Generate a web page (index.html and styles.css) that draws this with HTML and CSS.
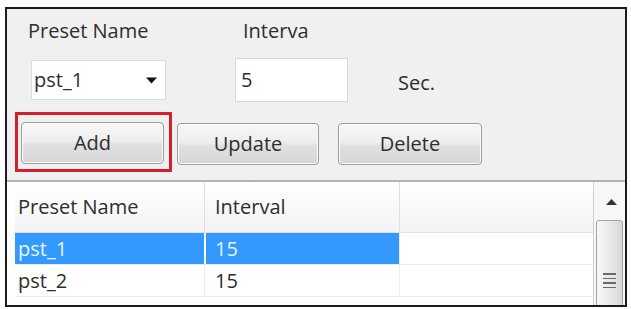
FILE: index.html
```html
<!DOCTYPE html>
<html>
<head>
<meta charset="utf-8">
<link rel="stylesheet" href="styles.css">
</head>
<body>
<div class="frame">
  <div class="form">
    <div class="labels">
      <span class="lbl lbl-name">Preset Name</span>
      <span class="lbl lbl-int">Interva</span>
    </div>
    <div class="fields">
      <div class="combo"><span>pst_1</span><svg class="caret" width="11" height="7" viewBox="0 0 11 7"><path d="M0 0.5h11L5.5 6.5z" fill="#111"/></svg></div>
      <div class="input">5</div>
      <span class="unit">Sec.</span>
    </div>
    <div class="buttons">
      <div class="highlight"><button class="btn btn-add">Add</button></div>
      <button class="btn btn-update">Update</button>
      <button class="btn btn-delete">Delete</button>
    </div>
  </div>
  <div class="table">
    <div class="grid">
      <div class="row head">
        <div class="cell c1">Preset Name</div>
        <div class="cell c2">Interval</div>
        <div class="cell c3"></div>
      </div>
      <div class="row selected">
        <div class="cell c1">pst_1</div>
        <div class="cell c2">15</div>
        <div class="cell c3"></div>
      </div>
      <div class="row">
        <div class="cell c1">pst_2</div>
        <div class="cell c2">15</div>
        <div class="cell c3"></div>
      </div>
    </div>
    <div class="scrollbar">
      <svg class="up" width="11" height="6" viewBox="0 0 11 6"><path d="M0 6L5.5 0 11 6z" fill="#333"/></svg>
      <div class="thumb">
        <span class="grip"></span><span class="grip"></span><span class="grip"></span><span class="grip"></span>
      </div>
    </div>
  </div>
</div>
</body>
</html>
```
FILE: styles.css
```css
* { box-sizing: border-box; }
html, body { margin: 0; padding: 0; background: #ffffff; }
body {
  font-family: "Open Sans", "Noto Sans", sans-serif;
  font-size: 20px;
  line-height: 24px;
  color: #2e2e2e;
}
.frame {
  margin: 7px 0 0 5px;
  width: 622px;
  height: 300px;
  border: 2px solid #1c1c1c;
  background: #f0f0f0;
  display: flex;
  flex-direction: column;
  overflow: hidden;
}
.form {
  padding-top: 10px;
  border-bottom: 2px solid #b3b3b3;
  padding-bottom: 15px;
}
.labels { display: flex; height: 24px; }
.lbl-name { margin-left: 21px; width: 215px; }
.fields {
  display: flex;
  align-items: center;
  height: 44px;
  margin-top: 15px;
}
.combo {
  margin-left: 24px;
  width: 135px;
  height: 40px;
  background: #ffffff;
  border: 1px solid #dcdcdc;
  display: flex;
  align-items: center;
  justify-content: space-between;
  padding: 0 8px 0 2px;
}
.caret { margin-top: 1px; }
.input {
  margin-left: 69px;
  width: 113px;
  height: 44px;
  background: #ffffff;
  border: 1px solid #d8d8d8;
  padding: 9px 0 0 5px;
}
.unit { margin-left: 50px; margin-top: 6px; }
.buttons {
  display: flex;
  align-items: flex-start;
  margin-top: 20px;
  height: 43px;
}
.highlight { position: relative; margin-left: 14px; }
.highlight::after {
  content: "";
  position: absolute;
  top: -10px; left: -6px; right: -8px; bottom: -8px;
  border: 3px solid #d3202c;
}
.btn {
  font: inherit;
  color: #2e2e2e;
  height: 42px;
  padding: 0;
  border: 1px solid #9c9c9c;
  border-radius: 4px;
  background: linear-gradient(#f7f7f7 0%, #eeeeee 45%, #e0e0e0 55%, #d6d6d6 100%);
  box-shadow: inset 0 0 0 1px #fbfbfb;
}
.btn-add { width: 143px; display: block; }
.btn-update { width: 142px; margin-left: 13px; margin-top: 1px; }
.btn-delete { width: 144px; margin-left: 19px; margin-top: 1px; }
.table {
  flex: 1;
  display: flex;
  background: #ffffff;
  overflow: hidden;
}
.grid { width: 586px; padding-left: 8px; }
.row {
  display: flex;
  height: 32px;
  border-bottom: 1px solid #ebebeb;
}
.row.head {
  height: 51px;
  background: linear-gradient(#ffffff, #f3f3f3);
  border-bottom: 1px solid #e2e2e2;
  align-items: stretch;
}
.cell {
  display: flex;
  align-items: center;
  border-right: 1px solid #ececec;
  margin-right: 1px;
}
.c1 { width: 190px; padding-left: 3px; }
.c2 { width: 194px; padding-left: 9px; }
.c3 { flex: 1; border-right: none; margin-right: 0; }
.head .cell { border-right-color: #e0e0e0; }
.selected .c1, .selected .c2 { background: #3399ff; color: #eaf4ff; }
.selected .c1 { border-right-color: #ffffff; }
.scrollbar {
  width: 32px;
  border-left: 1px solid #cfcfcf;
  background: #f7f7f7;
  display: flex;
  flex-direction: column;
  align-items: center;
  padding-top: 17px;
}
.up { display: block; flex-shrink: 0; margin-left: 4px; }
.thumb {
  margin-top: 15px;
  width: 27px;
  height: 110px;
  flex-shrink: 0;
  border: 1px solid #a3a3a3;
  border-radius: 3px;
  background: linear-gradient(to right, #f8f8f8, #e6e6e6 60%, #d8d8d8);
  display: flex;
  flex-direction: column;
  align-items: center;
  padding-top: 52px;
  gap: 3px;
}
.grip { display: block; width: 13px; height: 1.5px; background: #6a6a6a; }
```
